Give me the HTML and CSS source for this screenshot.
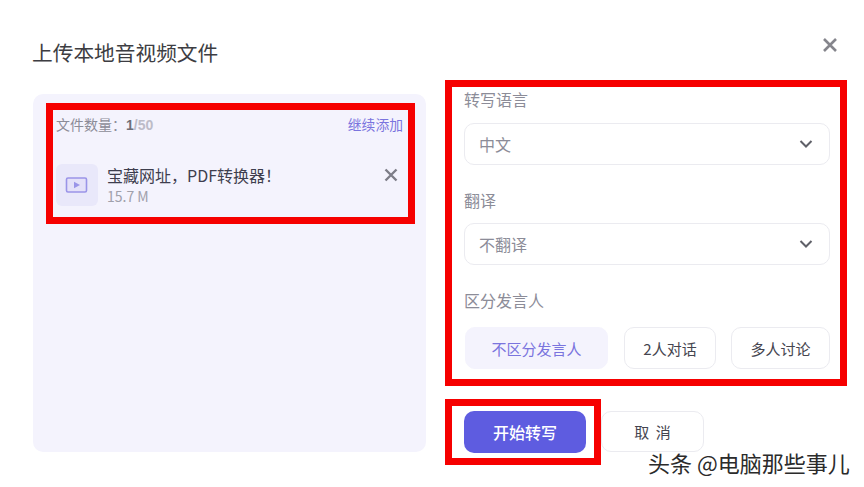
FILE: index.html
```html
<!DOCTYPE html>
<html lang="zh-CN">
  <head>
    <meta charset="UTF-8" />
    <meta name="viewport" content="width=device-width, initial-scale=1.0" />
    <title>上传本地音视频文件</title>
    <link rel="stylesheet" href="styles.css">
  </head>
  <body>
    <div class="dialog">
      <h1 class="dialogTitle">上传本地音视频文件</h1>
      <button class="dialogClose" aria-label="关闭">
        <svg width="16" height="16" viewBox="0 0 16 16">
          <path d="M2 2 L14 14 M14 2 L2 14" stroke="#85858c" stroke-width="2.6" fill="none" />
        </svg>
      </button>

      <div class="filePanel">
        <div class="fileMark">
          <div class="fileHead">
            <span class="fileCount">文件数量：<b>1</b><em>/50</em></span>
            <a class="fileAdd">继续添加</a>
          </div>
          <div class="fileRow">
            <div class="fileIcon">
              <svg width="24" height="18" viewBox="0 0 24 18">
                <rect x="1.5" y="2" width="20" height="14" rx="1.5" fill="#e4e1f9" stroke="#9a94e8" stroke-width="1.6" />
                <path d="M9 5.8 L15 9 L9 12.2 Z" fill="#9a94e8" />
              </svg>
            </div>
            <div class="fileInfo">
              <div class="fileName">宝藏网址，PDF转换器！</div>
              <div class="fileSize">15.7 M</div>
            </div>
            <button class="fileRemove" aria-label="移除">
              <svg width="16" height="16" viewBox="0 0 16 16">
                <path d="M2.5 2.5 L13.5 13.5 M13.5 2.5 L2.5 13.5" stroke="#7d7d88" stroke-width="2.4" fill="none" />
              </svg>
            </button>
          </div>
        </div>
      </div>

      <div class="sideCol">
        <div class="optionsMark">
          <div class="fieldLabel">转写语言</div>
          <div class="selectBox">
            <span>中文</span>
            <svg width="14" height="10" viewBox="0 0 14 10">
              <path d="M1.5 2 L7 7.5 L12.5 2" stroke="#5f6068" stroke-width="2" fill="none" />
            </svg>
          </div>

          <div class="fieldLabel second">翻译</div>
          <div class="selectBox">
            <span>不翻译</span>
            <svg width="14" height="10" viewBox="0 0 14 10">
              <path d="M1.5 2 L7 7.5 L12.5 2" stroke="#5f6068" stroke-width="2" fill="none" />
            </svg>
          </div>

          <div class="fieldLabel second">区分发言人</div>
          <div class="speakerBtns">
            <button class="speakerBtn active">不区分发言人</button>
            <button class="speakerBtn two">2人对话</button>
            <button class="speakerBtn many">多人讨论</button>
          </div>
        </div>

        <div class="actions">
          <div class="startMark">
            <button class="startBtn">开始转写</button>
          </div>
          <button class="cancelBtn">取 消</button>
        </div>
      </div>

      <div class="watermark">头条 @电脑那些事儿</div>
    </div>
  </body>
</html>
```

FILE: styles.css
```css
html,
body {
  margin: 0;
  padding: 0;
  background: white;
}

body {
  width: 864px;
  height: 487px;
  overflow: hidden;
  font-family: "Noto Sans CJK SC", "Liberation Sans", sans-serif;
}

button {
  font-family: inherit;
  padding: 0;
  background: none;
  border: none;
}

.dialog {
  position: relative;
  display: grid;
  grid-template-columns: 393px 402px;
  grid-template-rows: 80px auto;
  column-gap: 19px;
  padding-left: 33px;
  height: 487px;
  box-sizing: border-box;
}

.dialogTitle {
  grid-column: 1 / 3;
  margin: 37px 0 0 -1px;
  font-size: 20.7px;
  line-height: 30px;
  font-weight: 400;
  color: #3d3d42;
}

/* sits in the dialog corner */
.dialogClose {
  position: absolute;
  left: 822px;
  top: 37px;
  width: 16px;
  height: 16px;
}

.filePanel {
  margin-top: 14px;
  height: 358px;
  padding: 9px 11px 0 13px;
  box-sizing: border-box;
  background-color: #f4f3fd;
  border-radius: 10px;
}

.fileMark {
  height: 121px;
  box-sizing: border-box;
  border: 7px solid #f60000;
  padding: 0 5px 0 3px;
}

.fileHead {
  display: flex;
  justify-content: space-between;
  align-items: center;
  height: 27px;
  font-size: 14px;
  color: #8c8c98;
}

.fileCount b {
  font-family: "Liberation Sans", sans-serif;
  color: #6f6f78;
}

.fileCount em {
  font-family: "Liberation Sans", sans-serif;
  font-style: normal;
  font-weight: 700;
  color: #bdbcc8;
}

.fileAdd {
  font-size: 13.8px;
  color: #7a74de;
}

.fileRow {
  display: flex;
  align-items: center;
  margin-top: 27px;
}

.fileIcon {
  display: flex;
  align-items: center;
  justify-content: center;
  width: 42px;
  height: 42px;
  border-radius: 6px;
  background-color: #e9e8fa;
}

.fileInfo {
  margin-left: 9px;
  flex: 1;
}

.fileName {
  font-size: 16px;
  line-height: 23px;
  color: #3e3e4e;
}

.fileSize {
  font-size: 14px;
  line-height: 19px;
  color: #a0a0ab;
}

.fileRemove {
  width: 16px;
  height: 16px;
  margin: -20px 4px 0 0;
}

.optionsMark {
  height: 306px;
  box-sizing: border-box;
  border: 7px solid #f60000;
  padding: 0 10px 0 12px;
}

.fieldLabel {
  font-size: 16px;
  line-height: 25px;
  color: #8c8c98;
  margin-bottom: 11px;
}

.fieldLabel.second {
  margin-top: 23px;
  margin-bottom: 10px;
}

.selectBox {
  display: flex;
  justify-content: space-between;
  align-items: center;
  height: 42px;
  box-sizing: border-box;
  padding: 0 16px 0 14px;
  border: 1px solid #ebebf0;
  border-radius: 10px;
  font-size: 16px;
  color: #8c8c98;
}

.speakerBtns {
  display: flex;
  margin-top: 14px;
}

.speakerBtn {
  height: 42px;
  box-sizing: border-box;
  border: 1px solid #ebebf0;
  border-radius: 10px;
  font-size: 15px;
  color: #45454f;
}

.speakerBtn.active {
  width: 143px;
  margin-left: 1px;
  border-color: #f4f3fd;
  background-color: #f4f3fd;
  color: #7a74de;
}

.speakerBtn.two {
  width: 92px;
  margin-left: 16px;
}

.speakerBtn.many {
  width: 99px;
  margin-left: 15px;
}

.actions {
  display: flex;
  margin-top: 13px;
}

.startMark {
  width: 156px;
  height: 66px;
  box-sizing: border-box;
  border: 7px solid #f60000;
  padding: 5px 8px 0 12px;
}

.startBtn {
  width: 122px;
  height: 42px;
  border-radius: 10px;
  background-color: #5e5ce0;
  color: white;
  font-size: 16px;
  font-weight: 500;
}

.cancelBtn {
  width: 103px;
  height: 41px;
  margin-top: 12px;
  box-sizing: border-box;
  border: 1px solid #ebebf0;
  border-radius: 10px;
  font-size: 15px;
  word-spacing: 3px;
  color: #45454f;
}

/* site watermark over the screenshot */
.watermark {
  position: absolute;
  left: 648px;
  top: 447px;
  font-size: 22px;
  line-height: 30px;
  white-space: nowrap;
  color: #2b2b2b;
  text-shadow: 0 0 2px white, 0 0 2px white;
}
```
